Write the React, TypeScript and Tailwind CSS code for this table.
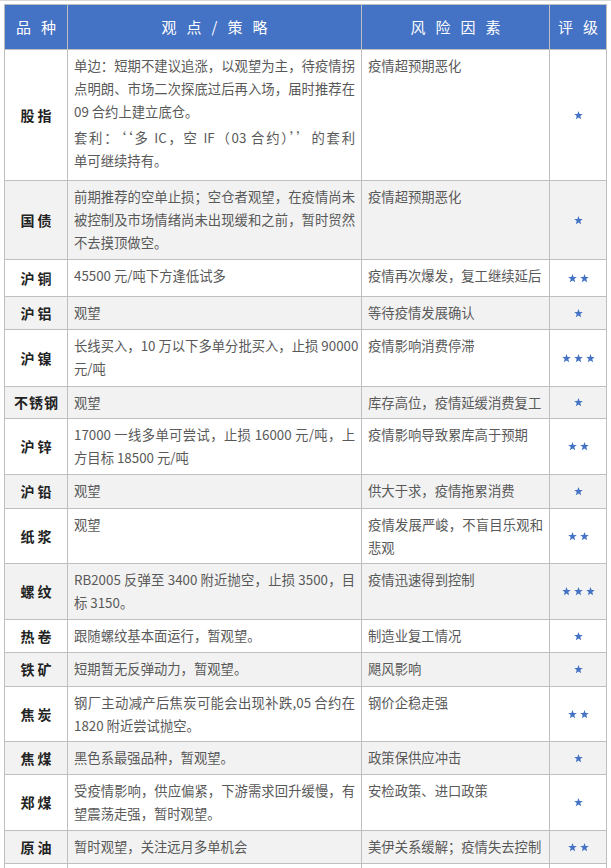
import React from "react";

type Row = {
  name: string;
  wide?: boolean;
  strat: string[][];
  risk: string[];
  stars: number;
  h: string;
  bg: string;
};

const W = "bg-white";
const G = "bg-[#f2f2f2]";

const rows: Row[] = [
  {
    name: "股指",
    strat: [
      ["单边：短期不建议追涨，以观望为主，待疫情拐", "点明朗、市场二次探底过后再入场，届时推荐在", "09 合约上建立底仓。"],
      ["套利：‘‘多 IC，空 IF（03 合约）’’的套利", "单可继续持有。"],
    ],
    risk: ["疫情超预期恶化"],
    stars: 1,
    h: "h-[131px]",
    bg: W,
  },
  {
    name: "国债",
    strat: [["前期推荐的空单止损；空仓者观望，在疫情尚未", "被控制及市场情绪尚未出现缓和之前，暂时贸然", "不去摸顶做空。"]],
    risk: ["疫情超预期恶化"],
    stars: 1,
    h: "h-[79px]",
    bg: G,
  },
  { name: "沪铜", strat: [["45500 元/吨下方逢低试多"]], risk: ["疫情再次爆发，复工继续延后"], stars: 2, h: "h-[37px]", bg: W },
  { name: "沪铝", strat: [["观望"]], risk: ["等待疫情发展确认"], stars: 1, h: "h-[33px]", bg: G },
  {
    name: "沪镍",
    strat: [["长线买入，10 万以下多单分批买入，止损 90000", "元/吨"]],
    risk: ["疫情影响消费停滞"],
    stars: 3,
    h: "h-[57px]",
    bg: W,
  },
  { name: "不锈钢", wide: true, strat: [["观望"]], risk: ["库存高位，疫情延缓消费复工"], stars: 1, h: "h-[32px]", bg: G },
  {
    name: "沪锌",
    strat: [["17000 一线多单可尝试，止损 16000 元/吨，上", "方目标 18500 元/吨"]],
    risk: ["疫情影响导致累库高于预期"],
    stars: 2,
    h: "h-[56px]",
    bg: W,
  },
  { name: "沪铅", strat: [["观望"]], risk: ["供大于求，疫情拖累消费"], stars: 1, h: "h-[34px]", bg: G },
  { name: "纸浆", strat: [["观望"]], risk: ["疫情发展严峻，不盲目乐观和", "悲观"], stars: 2, h: "h-[55px]", bg: W },
  {
    name: "螺纹",
    strat: [["RB2005 反弹至 3400 附近抛空，止损 3500，目", "标 3150。"]],
    risk: ["疫情迅速得到控制"],
    stars: 3,
    h: "h-[56px]",
    bg: G,
  },
  { name: "热卷", strat: [["跟随螺纹基本面运行，暂观望。"]], risk: ["制造业复工情况"], stars: 1, h: "h-[33px]", bg: W },
  { name: "铁矿", strat: [["短期暂无反弹动力，暂观望。"]], risk: ["飓风影响"], stars: 1, h: "h-[34px]", bg: G },
  {
    name: "焦炭",
    strat: [["钢厂主动减产后焦炭可能会出现补跌,05 合约在", "1820 附近尝试抛空。"]],
    risk: ["钢价企稳走强"],
    stars: 2,
    h: "h-[55px]",
    bg: W,
  },
  { name: "焦煤", strat: [["黑色系最强品种，暂观望。"]], risk: ["政策保供应冲击"], stars: 1, h: "h-[33px]", bg: G },
  {
    name: "郑煤",
    strat: [["受疫情影响，供应偏紧，下游需求回升缓慢，有", "望震荡走强，暂时观望。"]],
    risk: ["安检政策、进口政策"],
    stars: 1,
    h: "h-[56px]",
    bg: W,
  },
  { name: "原油", strat: [["暂时观望，关注远月多单机会"]], risk: ["美伊关系缓解；疫情失去控制"], stars: 2, h: "h-[33px]", bg: G },
  { name: "", strat: [[""]], risk: [""], stars: 0, h: "h-[33px]", bg: W },
];

function Star() {
  return (
    <svg width="9" height="9" viewBox="0 0 10 10" className="block">
      <path
        d="M5 0 L6.23 3.3 L9.76 3.46 L7 5.65 L7.94 9.05 L5 7.1 L2.06 9.05 L3 5.65 L0.24 3.46 L3.77 3.3 Z"
        fill="#4472c4"
      />
    </svg>
  );
}

function Lines({ lines }: { lines: string[] }) {
  return (
    <div>
      {lines.map((l, i) => (
        <div
          key={i}
          className={i < lines.length - 1 ? "text-justify [text-align-last:justify] whitespace-nowrap" : "whitespace-nowrap"}
        >
          {l}
        </div>
      ))}
    </div>
  );
}

function HeaderText({ chars }: { chars: string[] }) {
  return (
    <div className="flex items-center justify-center gap-[10px]">
      {chars.map((c, i) => (
        <span key={i}>{c}</span>
      ))}
    </div>
  );
}

export default function App() {
  return (
    <div className="min-h-screen bg-white font-['Noto_Sans_CJK_SC','Noto_Sans',sans-serif]">
      <div className="h-px bg-[#d9d9d9]" />
      <div className="pt-[3px] pl-[4px]">
        <div className="w-[603px] border-l border-t border-[#bfbfbf]">
          <div className="flex h-[45px] border-b border-[#bfbfbf] bg-[#4472c4] text-[15px] text-white">
            <div className="flex w-[63px] items-center justify-center border-r border-[#bfbfbf]">
              <HeaderText chars={["品", "种"]} />
            </div>
            <div className="flex w-[294px] items-center justify-center border-r border-[#bfbfbf]">
              <HeaderText chars={["观", "点", "/", "策", "略"]} />
            </div>
            <div className="flex w-[188px] items-center justify-center border-r border-[#bfbfbf]">
              <HeaderText chars={["风", "险", "因", "素"]} />
            </div>
            <div className="flex w-[57px] items-center justify-center border-r border-[#bfbfbf]">
              <HeaderText chars={["评", "级"]} />
            </div>
          </div>
          {rows.map((r, idx) => (
            <div key={idx} className={`flex border-b border-[#bfbfbf] ${r.h} ${r.bg}`}>
              <div className="flex w-[63px] items-center justify-center border-r border-[#bfbfbf] text-[14px] font-bold text-[#222222]">
                <span className={r.wide ? "pl-[1px] tracking-[1px]" : "pl-[3px] tracking-[3px]"}>{r.name}</span>
              </div>
              <div className="w-[294px] border-r border-[#bfbfbf] px-[6px] pt-[4px] text-[13.33px] leading-[23px] text-[#595959]">
                {r.strat.map((p, i) => (
                  <div key={i} className={i > 0 ? "mt-[3px]" : ""}>
                    <Lines lines={p} />
                  </div>
                ))}
              </div>
              <div className="w-[188px] border-r border-[#bfbfbf] px-[6px] pt-[4px] text-[13.33px] leading-[23px] text-[#595959]">
                <Lines lines={r.risk} />
              </div>
              <div className="flex w-[57px] items-center justify-center gap-[3px] border-r border-[#bfbfbf]">
                {Array.from({ length: r.stars }).map((_, i) => (
                  <Star key={i} />
                ))}
              </div>
            </div>
          ))}
        </div>
      </div>
    </div>
  );
}
